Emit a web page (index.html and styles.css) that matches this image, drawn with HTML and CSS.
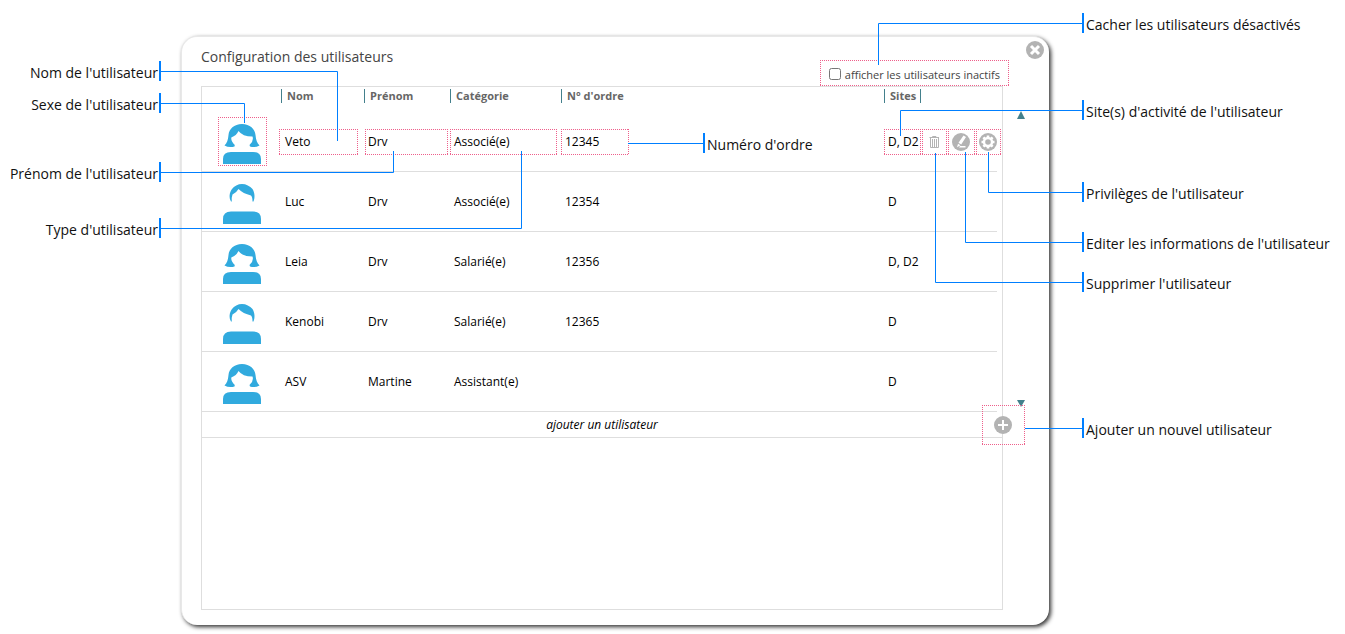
FILE: index.html
```html
<!DOCTYPE html>
<html lang="fr">
<head>
<meta charset="utf-8">
<title>Configuration des utilisateurs</title>
<link rel="stylesheet" href="styles.css">
</head>
<body>
<svg class="sprite" aria-hidden="true">
  <symbol id="woman" viewBox="0 0 38 40">
    <path d="M0 40V35Q0 28 8 28H30Q38 28 38 35V40Z"/>
    <path d="M19 0C11 0 6 5 5.500 11C5 16 4 19 1.500 21.500Q6 24 11.500 22.500L11.800 21C9 18.500 8 16 8.300 13.500Q13.500 11.500 15.500 7Q19.500 12.500 29.500 12.500Q31 17 26.500 21L27 22.500Q32 24 36.500 21.500C34 19 33 16 32.500 11C32 5 27 0 19 0Z"/>
  </symbol>
  <symbol id="man" viewBox="0 0 38 40">
    <path d="M0 40V35Q0 27.500 8 27.500H30Q38 27.500 38 35V40Z"/>
    <path d="M8 17.500C6 14 6 9 9 5C11 2 15 0 19 0C23 0 27 2 29.500 5C32 9 32 14 30.500 17.500H29.500Q29.500 13 28 11.500Q20 9.500 15.500 5Q14 8 9.500 10.500Q8.500 13 8.800 17.500Z"/>
  </symbol>
</svg>
<main class="stage">
  <section class="dialog">
    <button class="round close" aria-label="Fermer">
      <svg viewBox="0 0 18 18"><circle cx="9" cy="9" r="9" fill="#b3b3b3"/><path d="M5 5L13 13M13 5L5 13" stroke="#fff" stroke-width="3"/></svg>
    </button>
    <header class="head">
      <h1>Configuration des utilisateurs</h1>
      <label class="toggle"><input type="checkbox"> afficher les utilisateurs inactifs</label>
    </header>
    <div class="box">
      <table class="users">
        <colgroup><col class="c-avatar"><col class="c-nom"><col class="c-prenom"><col class="c-cat"><col><col class="c-sites"><col class="c-act"></colgroup>
        <thead>
          <tr><th></th><th><span>Nom</span></th><th><span>Prénom</span></th><th><span>Catégorie</span></th><th><span>N° d'ordre</span></th><th><span class="last">Sites</span></th><th></th></tr>
        </thead>
        <tbody>
          <tr><td><svg class="avatar"><use href="#woman"/></svg></td><td>Veto</td><td>Drv</td><td>Associé(e)</td><td>12345</td><td>D, D2</td>
            <td class="acts"><div class="actions">
              <button class="round" aria-label="Supprimer"><svg viewBox="0 0 18 18" fill="none" stroke="#b3b3b3"><path d="M4.500 4.500H14M7.500 4V3.500H11V4M5.500 5V14.500H13.500V5M7.500 6V14M9.500 6V14M11.500 6V14"/></svg></button>
              <button class="round" aria-label="Editer"><svg viewBox="0 0 18 18"><circle cx="9" cy="9" r="9" fill="#b3b3b3"/><path d="M11.500 2.500L14 4L9.200 11.500L6.500 9.800ZM6 10.700L8.500 12.300L5 14.200ZM8 13H13.500V14.500H7Z" fill="#fff"/></svg></button>
              <button class="round" aria-label="Privilèges"><svg viewBox="0 0 18 18"><circle cx="9" cy="9" r="9" fill="#b3b3b3"/><circle cx="9" cy="9" r="4" fill="none" stroke="#fff" stroke-width="2.400"/><path d="M9 2.500V5M9 13V15.500M2.500 9H5M13 9H15.500M4.400 4.400L6 6M12 12L13.600 13.600M13.600 4.400L12 6M6 12L4.400 13.600" stroke="#fff" stroke-width="2.600"/></svg></button>
            </div></td></tr>
          <tr><td><svg class="avatar"><use href="#man"/></svg></td><td>Luc</td><td>Drv</td><td>Associé(e)</td><td>12354</td><td>D</td><td></td></tr>
          <tr><td><svg class="avatar"><use href="#woman"/></svg></td><td>Leia</td><td>Drv</td><td>Salarié(e)</td><td>12356</td><td>D, D2</td><td></td></tr>
          <tr><td><svg class="avatar"><use href="#man"/></svg></td><td>Kenobi</td><td>Drv</td><td>Salarié(e)</td><td>12365</td><td>D</td><td></td></tr>
          <tr><td><svg class="avatar"><use href="#woman"/></svg></td><td>ASV</td><td>Martine</td><td>Assistant(e)</td><td></td><td>D</td><td></td></tr>
        </tbody>
      </table>
      <div class="add">ajouter un utilisateur
        <button class="round plus" aria-label="Ajouter un utilisateur"><svg viewBox="0 0 18 18"><circle cx="9" cy="9" r="9" fill="#b3b3b3"/><path d="M4 9H14M9 4V14" stroke="#fff" stroke-width="2"/></svg></button>
      </div>
      <i class="arrow up"></i>
      <i class="arrow down"></i>
    </div>
  </section>

  <svg class="lines left" viewBox="0 0 720 260" width="720" height="260">
    <g class="mark"><path d="M218 117.500H267M218 165.500H267M218.500 117V166M266.500 117V166"/><path d="M279 129.500H358M279 154.500H358M279.500 129V155M357.500 129V155"/><path d="M365 129.500H448M365 154.500H448M365.500 129V155M447.500 129V155"/><path d="M450 129.500H557M450 154.500H557M450.500 129V155M556.500 129V155"/><path d="M561 129.500H629M561 154.500H629M561.500 129V155M628.500 129V155"/></g>
    <path class="wire" d="M160 71.500H337.500V141M160 103.500H244.500V123M160 172.500H393.500V151M160 228.500H521.500V151M628 143.500H704"/>
  </svg>
  <svg class="lines right" viewBox="800 0 545 460" width="545" height="460">
    <g class="mark"><path d="M820 60.500H1009M820 85.500H1009M820.500 60V86M1008.500 60V86"/><path d="M884 129.500H921M884 154.500H921M884.500 129V155M920.500 129V155"/><path d="M922 129.500H947M922 154.500H947M922.500 129V155M946.500 129V155"/><path d="M948 129.500H975M948 154.500H975M948.500 129V155M974.500 129V155"/><path d="M976 129.500H1001M976 154.500H1001M976.500 129V155M1000.500 129V155"/><path d="M982 405.500H1025M982 444.500H1025M982.500 405V445M1024.500 405V445"/></g>
    <path class="wire" d="M1083 23.500H878.500V65M1083 110.500H900.500V136M1083 192.500H988.500V152M1083 242.500H965.500V152M1083 282.500H935.500V153M1083 428.500H1025"/>
  </svg>

  <p class="note west n1">Nom de l'utilisateur</p>
  <p class="note west n2">Sexe de l'utilisateur</p>
  <p class="note west n3">Prénom de l'utilisateur</p>
  <p class="note west n4">Type d'utilisateur</p>
  <p class="note order">Numéro d'ordre</p>
  <p class="note east n5">Cacher les utilisateurs désactivés</p>
  <p class="note east n6">Site(s) d'activité de l'utilisateur</p>
  <p class="note east n7">Privilèges de l'utilisateur</p>
  <p class="note east n8">Editer les informations de l'utilisateur</p>
  <p class="note east n9">Supprimer l'utilisateur</p>
  <p class="note east n10">Ajouter un nouvel utilisateur</p>
</main>
</body>
</html>
```
FILE: styles.css
```css
* { box-sizing: border-box; }
body { margin: 0; background: #fff; color: #111; font-family: "Open Sans", "Noto Sans", sans-serif; }
.sprite { position: absolute; width: 0; height: 0; }

.stage { position: relative; min-width: 1200px; min-height: 100vh; padding: 36px 296px 8px 181px; }

.dialog { position: relative; padding: 0 46px 15px 19px; border: 1px solid #e8e8e8; border-right: 0; border-bottom: 0; border-radius: 16px; box-shadow: 2px 2px 4px #333; background: #fff; }
.head { display: flex; justify-content: space-between; height: 49px; }
h1 { margin: 10px 0 0; font-size: 14px; line-height: 20px; font-weight: 400; color: #444; }
.toggle { display: flex; align-items: center; gap: 4px; align-self: flex-end; height: 24px; padding-right: 3px; font-size: 11px; color: #444; }
.toggle input { width: 12px; height: 12px; margin: 0; }

.round { display: block; width: 18px; height: 18px; padding: 0; border: 0; background: none; }
.round svg { display: block; width: 18px; height: 18px; }
.close { position: absolute; top: 4px; right: 5px; }

.box { position: relative; min-height: 524px; border: 1px solid #dedede; }
.users { width: calc(100% - 5px); border-collapse: separate; border-spacing: 0; table-layout: fixed; }
.c-avatar { width: 79px; }
.c-nom { width: 83px; }
.c-prenom { width: 86px; }
.c-cat { width: 111px; }
.c-sites { width: 37px; }
.c-act { width: 76px; }
th { height: 25px; padding: 2px 0 0; text-align: left; vertical-align: top; font-size: 11px; line-height: 14px; font-weight: 700; color: #666; }
th span { display: block; padding-left: 5px; border-left: 1px solid #43808c; }
th .last { border-right: 1px solid #43808c; }
td { height: 60px; padding: 0 0 0 4px; border-bottom: 1px solid #dedede; font-size: 12px; line-height: 16px; color: #000; white-space: nowrap; }
td:first-child { padding: 4px 0 0 21px; }
td.acts { padding: 0 0 0 4px; }
.avatar { display: block; width: 38px; height: 40px; fill: #31aade; }
.actions { display: flex; gap: 9px; }

.add { position: relative; height: 26px; border-bottom: 1px solid #dedede; text-align: center; font-size: 12px; line-height: 25px; font-style: italic; color: #000; }
.plus { position: absolute; top: 4px; right: -10px; }
.arrow { position: absolute; right: -23px; border: 4px solid transparent; }
.up { top: 24px; border-top: 0; border-bottom: 8px solid #43808c; }
.down { top: 313px; border-bottom: 0; border-top: 7px solid #43808c; }

.lines { position: absolute; top: 0; fill: none; pointer-events: none; }
.left { left: 0; }
.right { right: 0; }
.mark { stroke: #ee5f8b; stroke-dasharray: 1 1; }
.wire { stroke: #007fff; }

.note { position: absolute; height: 20px; margin: 0; font-size: 14px; line-height: 24px; white-space: nowrap; }
.west { left: 0; width: 161px; padding-right: 1px; border-right: 2px solid #007fff; text-align: right; }
.order { top: 133px; left: 703px; padding-left: 2px; border-left: 2px solid #007fff; }
.east { right: 0; width: 263px; padding-left: 2px; border-left: 2px solid #007fff; }
.n1 { top: 61px; }
.n2 { top: 93px; }
.n3 { top: 162px; }
.n4 { top: 218px; }
.n5 { top: 13px; }
.n6 { top: 100px; }
.n7 { top: 182px; }
.n8 { top: 232px; }
.n9 { top: 272px; }
.n10 { top: 418px; }
```
